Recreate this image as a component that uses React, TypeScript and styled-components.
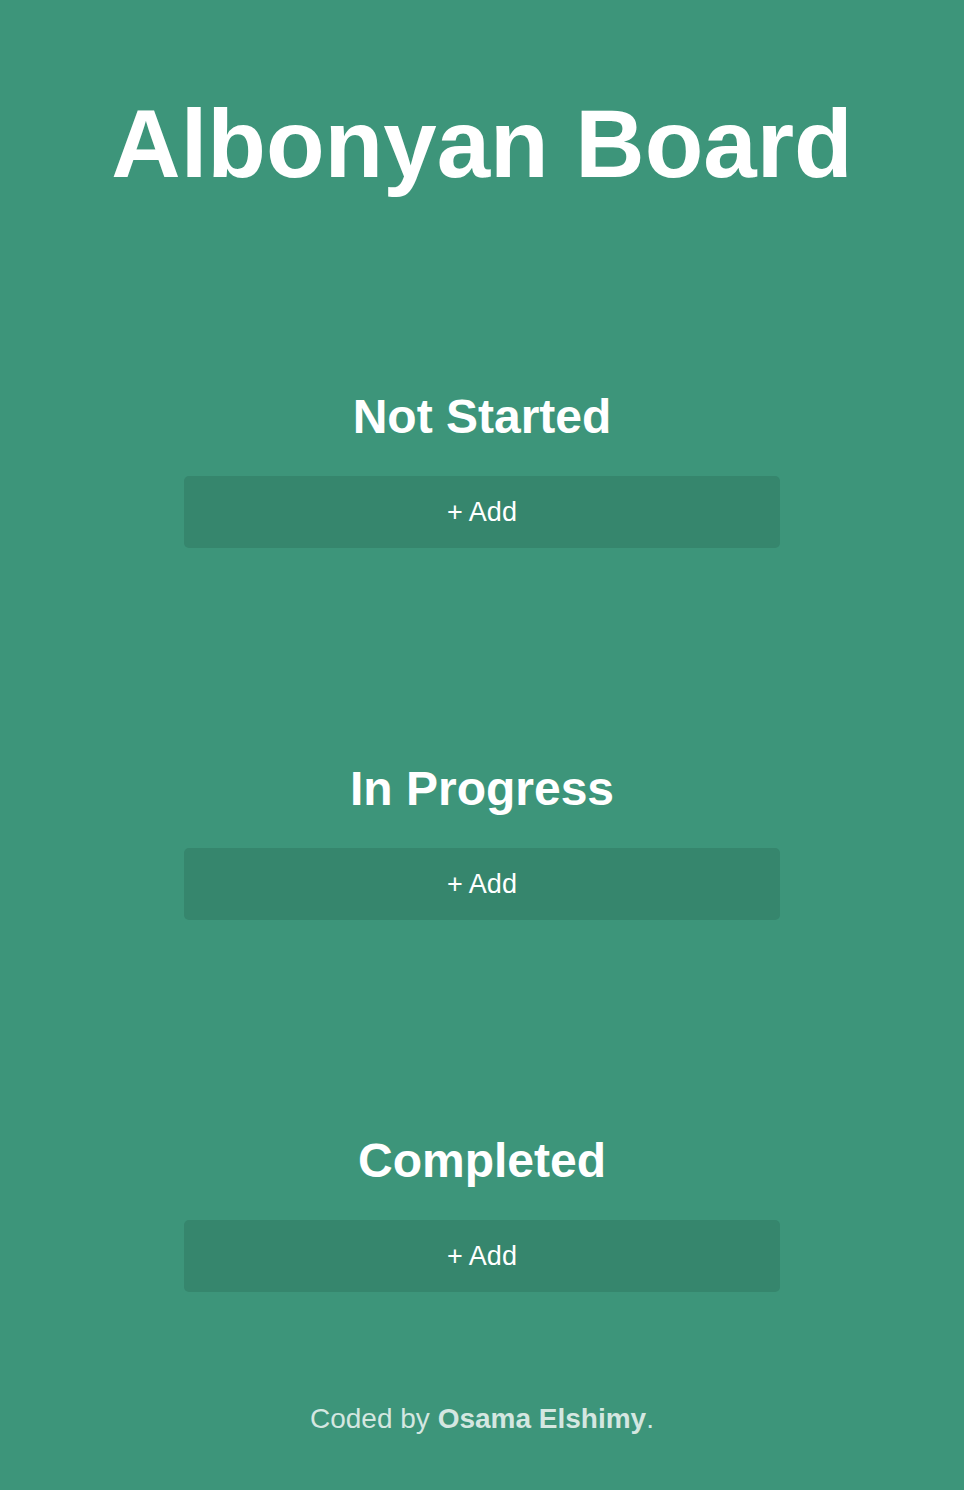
import React from "react";
import styled, { createGlobalStyle } from "styled-components";

const GlobalStyle = createGlobalStyle`
  html, body {
    margin: 0;
    padding: 0;
    background: #3d957a;
  }
  body {
    font-family: "Liberation Sans", Arial, sans-serif;
    color: #ffffff;
  }
`;

const Page = styled.div`
  min-height: 1490px;
  box-sizing: border-box;
  padding-top: 89px;
  display: flex;
  flex-direction: column;
  align-items: center;
  background: #3d957a;
`;

const Title = styled.h1`
  margin: 0;
  font-size: 96px;
  line-height: 110px;
  font-weight: 700;
  color: #ffffff;
  text-align: center;
`;

const Board = styled.main`
  margin-top: 190px;
  display: flex;
  flex-direction: column;
  align-items: center;
  gap: 213px;
  width: 100%;
`;

const Column = styled.section`
  display: flex;
  flex-direction: column;
  align-items: center;
  width: 596px;
`;

const ColumnTitle = styled.h2`
  margin: 0;
  font-size: 48px;
  line-height: 55px;
  font-weight: 700;
  color: #ffffff;
  text-align: center;
`;

const AddButton = styled.button`
  margin-top: 32px;
  width: 100%;
  height: 72px;
  border: none;
  border-radius: 5px;
  background: #36866d;
  color: #ffffff;
  font-family: "Liberation Sans", Arial, sans-serif;
  font-size: 27px;
  cursor: pointer;
  display: flex;
  align-items: center;
  justify-content: center;
`;

const Footer = styled.footer`
  margin-top: 111px;
  font-size: 28px;
  line-height: 32px;
  color: rgba(255, 255, 255, 0.78);
  text-align: center;

  strong {
    font-weight: 700;
  }
`;

const columns = ["Not Started", "In Progress", "Completed"];

export default function App() {
  return (
    <>
      <GlobalStyle />
      <Page>
        <Title>Albonyan Board</Title>
        <Board>
          {columns.map((c) => (
            <Column key={c}>
              <ColumnTitle>{c}</ColumnTitle>
              <AddButton>+ Add</AddButton>
            </Column>
          ))}
        </Board>
        <Footer>
          Coded by <strong>Osama Elshimy</strong>.
        </Footer>
      </Page>
    </>
  );
}
